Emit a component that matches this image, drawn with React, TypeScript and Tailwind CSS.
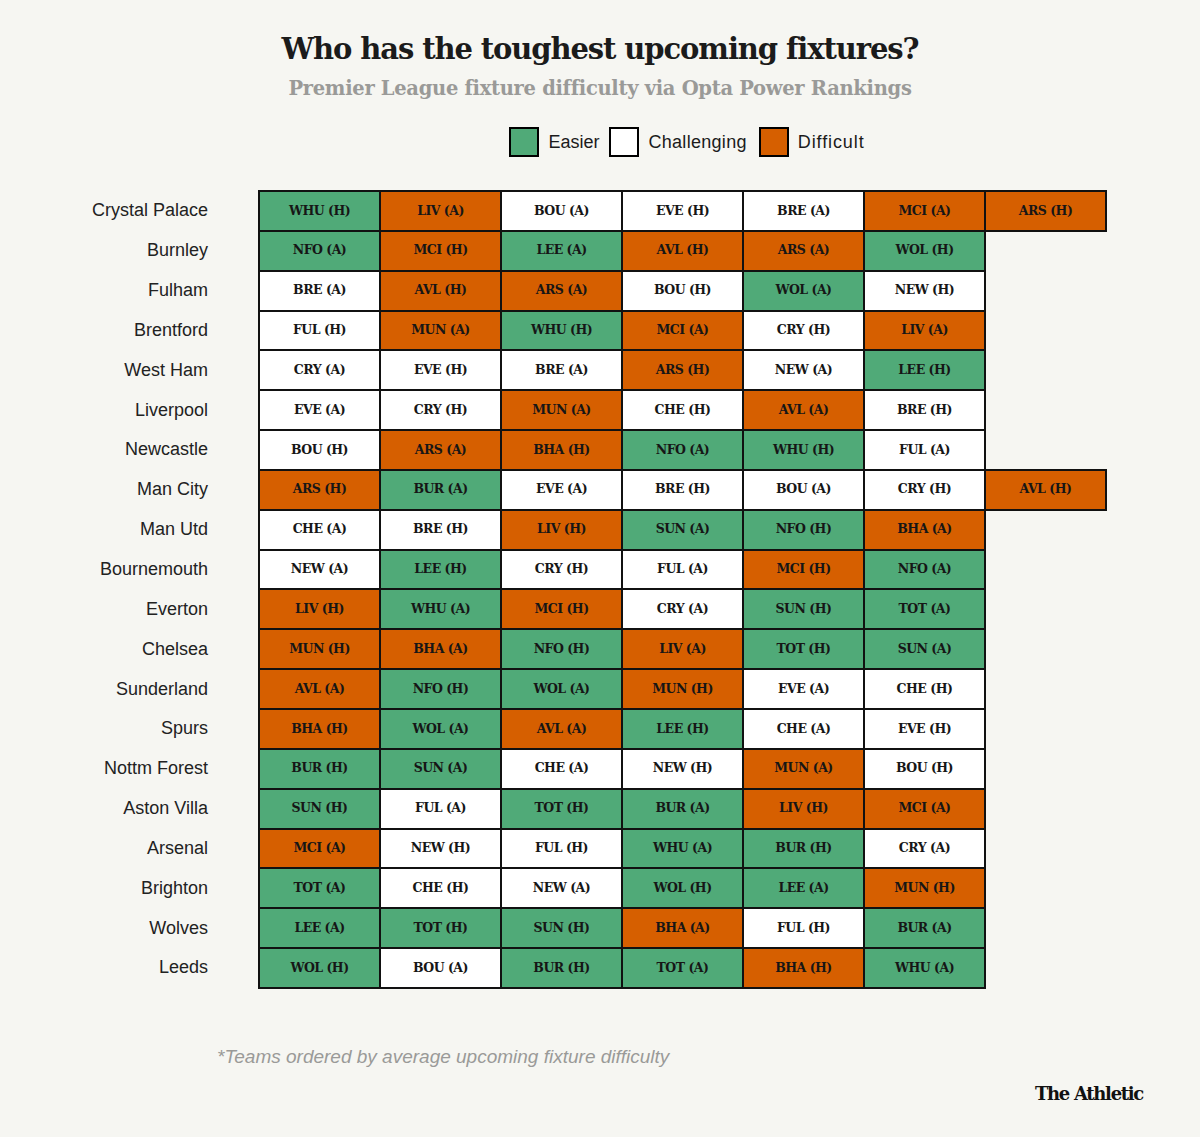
import React from "react";

type C = "G" | "W" | "O";
const rows: [string, [string, C][]][] = [
  ["Crystal Palace", [["WHU (H)", "G"], ["LIV (A)", "O"], ["BOU (A)", "W"], ["EVE (H)", "W"], ["BRE (A)", "W"], ["MCI (A)", "O"], ["ARS (H)", "O"]]],
  ["Burnley", [["NFO (A)", "G"], ["MCI (H)", "O"], ["LEE (A)", "G"], ["AVL (H)", "O"], ["ARS (A)", "O"], ["WOL (H)", "G"]]],
  ["Fulham", [["BRE (A)", "W"], ["AVL (H)", "O"], ["ARS (A)", "O"], ["BOU (H)", "W"], ["WOL (A)", "G"], ["NEW (H)", "W"]]],
  ["Brentford", [["FUL (H)", "W"], ["MUN (A)", "O"], ["WHU (H)", "G"], ["MCI (A)", "O"], ["CRY (H)", "W"], ["LIV (A)", "O"]]],
  ["West Ham", [["CRY (A)", "W"], ["EVE (H)", "W"], ["BRE (A)", "W"], ["ARS (H)", "O"], ["NEW (A)", "W"], ["LEE (H)", "G"]]],
  ["Liverpool", [["EVE (A)", "W"], ["CRY (H)", "W"], ["MUN (A)", "O"], ["CHE (H)", "W"], ["AVL (A)", "O"], ["BRE (H)", "W"]]],
  ["Newcastle", [["BOU (H)", "W"], ["ARS (A)", "O"], ["BHA (H)", "O"], ["NFO (A)", "G"], ["WHU (H)", "G"], ["FUL (A)", "W"]]],
  ["Man City", [["ARS (H)", "O"], ["BUR (A)", "G"], ["EVE (A)", "W"], ["BRE (H)", "W"], ["BOU (A)", "W"], ["CRY (H)", "W"], ["AVL (H)", "O"]]],
  ["Man Utd", [["CHE (A)", "W"], ["BRE (H)", "W"], ["LIV (H)", "O"], ["SUN (A)", "G"], ["NFO (H)", "G"], ["BHA (A)", "O"]]],
  ["Bournemouth", [["NEW (A)", "W"], ["LEE (H)", "G"], ["CRY (H)", "W"], ["FUL (A)", "W"], ["MCI (H)", "O"], ["NFO (A)", "G"]]],
  ["Everton", [["LIV (H)", "O"], ["WHU (A)", "G"], ["MCI (H)", "O"], ["CRY (A)", "W"], ["SUN (H)", "G"], ["TOT (A)", "G"]]],
  ["Chelsea", [["MUN (H)", "O"], ["BHA (A)", "O"], ["NFO (H)", "G"], ["LIV (A)", "O"], ["TOT (H)", "G"], ["SUN (A)", "G"]]],
  ["Sunderland", [["AVL (A)", "O"], ["NFO (H)", "G"], ["WOL (A)", "G"], ["MUN (H)", "O"], ["EVE (A)", "W"], ["CHE (H)", "W"]]],
  ["Spurs", [["BHA (H)", "O"], ["WOL (A)", "G"], ["AVL (A)", "O"], ["LEE (H)", "G"], ["CHE (A)", "W"], ["EVE (H)", "W"]]],
  ["Nottm Forest", [["BUR (H)", "G"], ["SUN (A)", "G"], ["CHE (A)", "W"], ["NEW (H)", "W"], ["MUN (A)", "O"], ["BOU (H)", "W"]]],
  ["Aston Villa", [["SUN (H)", "G"], ["FUL (A)", "W"], ["TOT (H)", "G"], ["BUR (A)", "G"], ["LIV (H)", "O"], ["MCI (A)", "O"]]],
  ["Arsenal", [["MCI (A)", "O"], ["NEW (H)", "W"], ["FUL (H)", "W"], ["WHU (A)", "G"], ["BUR (H)", "G"], ["CRY (A)", "W"]]],
  ["Brighton", [["TOT (A)", "G"], ["CHE (H)", "W"], ["NEW (A)", "W"], ["WOL (H)", "G"], ["LEE (A)", "G"], ["MUN (H)", "O"]]],
  ["Wolves", [["LEE (A)", "G"], ["TOT (H)", "G"], ["SUN (H)", "G"], ["BHA (A)", "O"], ["FUL (H)", "W"], ["BUR (A)", "G"]]],
  ["Leeds", [["WOL (H)", "G"], ["BOU (A)", "W"], ["BUR (H)", "G"], ["TOT (A)", "G"], ["BHA (H)", "O"], ["WHU (A)", "G"]]],
];

const bg: Record<C, string> = {
  G: "bg-[#50aa78]",
  W: "bg-white",
  O: "bg-[#d65f00]",
};

const slab = "font-[family-name:'DejaVu_Serif',serif]";
const sans = "font-[family-name:'Liberation_Sans',Arial,sans-serif]";

export default function App() {
  return (
    <div className="w-[1200px] h-[1137px] bg-[#f6f6f2] text-[#1b1b1b] flex flex-col">
      <h1 className={`${slab} font-bold text-[29px] tracking-[-1.1px] text-center mt-[31px] leading-[36px]`}>
        Who has the toughest upcoming fixtures?
      </h1>
      <h2 className={`${slab} font-bold text-[19.5px] tracking-[-0.3px] text-center text-[#9a9a98] mt-[9px] leading-[26px]`}>
        Premier League fixture difficulty via Opta Power Rankings
      </h2>
      <div className={`${sans} flex items-center justify-center gap-[9px] mt-[25px] text-[18px] ml-[174px]`}>
        <span className="w-[30px] h-[30px] border-2 border-black bg-[#50aa78]" />
        <span className="mr-[1px]">Easier</span>
        <span className="w-[30px] h-[30px] border-2 border-black bg-white" />
        <span className="mr-[3px] tracking-[0.3px]">Challenging</span>
        <span className="w-[30px] h-[30px] border-2 border-black bg-[#d65f00]" />
        <span className="tracking-[0.9px]">Difficult</span>
      </div>
      <div className="mt-[33px] flex flex-col">
        {rows.map(([team, fx], ri) => (
          <div key={team} className={`flex items-center ${ri > 0 ? "-mt-[2px]" : ""}`}>
            <div className={`${sans} w-[208px] text-right text-[18px] text-[#222]`}>{team}</div>
            <div className="flex ml-[50px]">
              {fx.map(([t, c], ci) => (
                <div
                  key={ci}
                  className={`${bg[c]} ${ci > 0 ? "-ml-[2px]" : ""} w-[123px] h-[41.85px] border-2 border-[#111] flex items-center justify-center ${slab} font-bold text-[12.5px] tracking-[-0.5px] text-[#161616]`}
                >
                  {t}
                </div>
              ))}
            </div>
          </div>
        ))}
      </div>
      <div className={`${sans} italic text-[19px] text-[#9a9a98] ml-[217px] mt-[54px]`}>
        *Teams ordered by average upcoming fixture difficulty
      </div>
      <div className="flex justify-end mr-[57px] mt-[9px]">
        <span className={`${slab} font-bold text-[18px] tracking-[-1.3px] text-[#111]`}>The Athletic</span>
      </div>
    </div>
  );
}
